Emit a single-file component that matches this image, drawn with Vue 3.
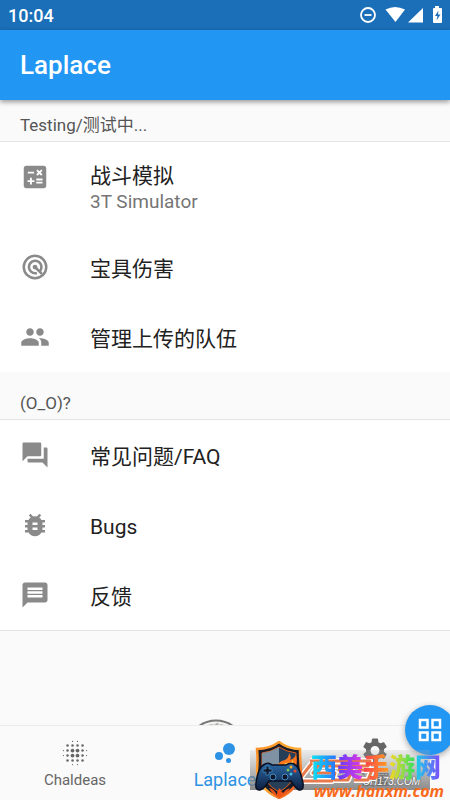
<script setup>
const sections = [
  {
    title: 'Testing/测试中...',
    items: [
      { icon: 'calc', title: '战斗模拟', subtitle: '3T Simulator' },
      { icon: 'target', title: '宝具伤害' },
      { icon: 'people', title: '管理上传的队伍' },
    ],
  },
  {
    title: '(O_O)?',
    items: [
      { icon: 'forum', title: '常见问题/FAQ' },
      { icon: 'bug', title: 'Bugs' },
      { icon: 'message', title: '反馈' },
    ],
  },
]

const paths = {
  calc: 'M19 3H5c-1.1 0-2 .9-2 2v14c0 1.1.9 2 2 2h14c1.1 0 2-.9 2-2V5c0-1.1-.9-2-2-2zm-5.97 4.06L14.09 6l1.41 1.41L16.91 6l1.06 1.06-1.41 1.41 1.41 1.41-1.06 1.06-1.41-1.4-1.41 1.41-1.06-1.06 1.41-1.41-1.41-1.42zM6.25 7.72h5v1.5h-5v-1.5zM11.5 16h-2v2H8v-2H6v-1.5h2v-2h1.5v2h2V16zm6.5 1.25h-5v-1.5h5v1.5zm0-2.5h-5v-1.5h5v1.5z',
  people: 'M16 11c1.66 0 2.99-1.34 2.99-3S17.66 5 16 5c-1.66 0-3 1.34-3 3s1.34 3 3 3zm-8 0c1.66 0 2.99-1.34 2.99-3S9.66 5 8 5C6.34 5 5 6.34 5 8s1.34 3 3 3zm0 2c-2.33 0-7 1.17-7 3.5V19h14v-2.5c0-2.33-4.67-3.5-7-3.5zm8 0c-.29 0-.62.02-.97.05 1.16.84 1.97 1.97 1.97 3.45V19h6v-2.5c0-2.33-4.67-3.5-7-3.5z',
  forum: 'M21 6h-2v9H6v2c0 .55.45 1 1 1h11l4 4V7c0-.55-.45-1-1-1zm-4 6V3c0-.55-.45-1-1-1H3c-.55 0-1 .45-1 1v14l4-4h10c.55 0 1-.45 1-1z',
  bug: 'M20 8h-2.81c-.45-.78-1.07-1.45-1.82-1.96L17 4.41 15.59 3l-2.17 2.17C12.96 5.06 12.49 5 12 5s-.96.06-1.41.17L8.41 3 7 4.41l1.62 1.63C7.88 6.55 7.26 7.22 6.81 8H4v2h2.09c-.05.33-.09.66-.09 1v1H4v2h2v1c0 .34.04.67.09 1H4v2h2.81c1.04 1.79 2.97 3 5.19 3s4.15-1.21 5.19-3H20v-2h-2.09c.05-.33.09-.66.09-1v-1h2v-2h-2v-1c0-.34-.04-.67-.09-1H20V8zm-6 8h-4v-2h4v2zm0-4h-4v-2h4v2z',
  message: 'M20 2H4c-1.1 0-1.99.9-1.99 2L2 22l4-4h14c1.1 0 2-.9 2-2V4c0-1.1-.9-2-2-2zm-2 12H6v-2h12v2zm0-3H6V9h12v2zm0-3H6V6h12v2z',
}

const dots = []
const radii = [
  [0, 0, 0.5, 0.5, 0, 0],
  [0, 1, 1, 1, 1, 0],
  [0.5, 1, 1.5, 1.5, 1, 0.5],
  [0.5, 1, 1.5, 1.5, 1, 0.5],
  [0, 1, 1, 1, 1, 0],
  [0, 0, 0.5, 0.5, 0, 0],
]
const stops = [2.75, 6, 10, 14, 18, 21.25]
radii.forEach((row, y) =>
  row.forEach((r, x) => {
    if (r) dots.push({ x: stops[x], y: stops[y], r })
  }),
)
</script>

<template>
  <div class="app">
    <div class="status">
      <span class="clock">10:04</span>
      <svg class="status-icons" viewBox="0 0 84 20" aria-hidden="true">
        <circle cx="8" cy="10" r="7" fill="none" stroke="#fff" stroke-width="1.8" />
        <path d="M4.5 10h7" stroke="#fff" stroke-width="1.8" />
        <path d="M25.500 4.500Q35 -.5 45 4.500L35.500 17Z" fill="#fff" />
        <path d="M63 3v14.500H48Z" fill="#fff" />
        <path d="M75 1h4v2h2q1 0 1 1v13q0 1-1 1h-7q-1 0-1-1V4q0-1 1-1h1z" fill="#fff" />
        <path d="M78.500 5.500l-3.500 5.500h2.500l-1 4.500 4-6h-2.500z" fill="#1a6fb8" />
      </svg>
    </div>
    <header class="bar"><h1>Laplace</h1></header>

    <main>
      <section v-for="s in sections" :key="s.title">
        <h2>{{ s.title }}</h2>
        <div class="list">
          <button v-for="i in s.items" :key="i.title" type="button" class="tile" :class="{ two: i.subtitle }">
            <svg class="icon" viewBox="0 0 24 24" aria-hidden="true">
              <g v-if="i.icon === 'target'" fill="none" stroke="currentColor" stroke-width="2">
                <circle cx="12" cy="12" r="9" />
                <path d="M15.600 15.600A5 5 0 1 0 13.500 16.800" />
                <path d="M12 12l5.500 5.500" />
                <circle cx="12" cy="12" r="1.900" fill="currentColor" stroke="none" />
              </g>
              <path v-else :d="paths[i.icon]" fill="currentColor" />
            </svg>
            <span class="label">
              <span class="title">{{ i.title }}</span>
              <span v-if="i.subtitle" class="subtitle">{{ i.subtitle }}</span>
            </span>
          </button>
        </div>
      </section>
      <div class="footer">
        <svg class="seal" viewBox="0 0 60 60" aria-hidden="true">
          <circle cx="30" cy="30" r="28.500" fill="#f5f5f1" stroke="#777" stroke-width="2" />
          <circle cx="30" cy="30" r="25" fill="none" stroke="#ccc" />
          <path d="M22 8l4-2M29 7l3-3M35 6l5 2" stroke="#aaa" stroke-width="1.500" />
        </svg>
      </div>
    </main>

    <nav>
      <button type="button" class="tab">
        <svg class="tab-icon" viewBox="0 0 24 24" aria-hidden="true">
          <circle v-for="(d, k) in dots" :key="k" :cx="d.x" :cy="d.y" :r="d.r" fill="currentColor" />
        </svg>
        <span>Chaldeas</span>
      </button>
      <button type="button" class="tab active">
        <svg class="tab-icon" viewBox="0 0 24 24" aria-hidden="true" fill="currentColor">
          <circle cx="7.200" cy="14.400" r="3.200" />
          <circle cx="14.800" cy="18" r="2" />
          <circle cx="15.200" cy="8.800" r="4.800" />
        </svg>
        <span>Laplace</span>
      </button>
      <button type="button" class="tab">
        <svg class="tab-icon" viewBox="0 0 24 24" aria-hidden="true">
          <path fill="currentColor" transform="translate(0 -2)" d="M19.140 12.940c.04-.3.06-.61.06-.94 0-.32-.02-.64-.07-.94l2.030-1.580c.18-.14.23-.41.12-.61l-1.920-3.320c-.12-.22-.37-.29-.59-.22l-2.390.96c-.5-.38-1.030-.7-1.620-.94l-.36-2.540c-.04-.24-.24-.41-.48-.41h-3.840c-.24 0-.43.17-.47.41l-.36 2.540c-.59.24-1.130.57-1.620.94l-2.390-.96c-.22-.08-.47 0-.59.22L2.740 8.870c-.12.21-.08.47.12.61l2.030 1.580c-.05.3-.09.63-.09.94s.02.64.07.94l-2.030 1.580c-.18.14-.23.41-.12.61l1.920 3.320c.12.22.37.29.59.22l2.390-.96c.5.38 1.030.7 1.620.94l.36 2.540c.05.24.24.41.48.41h3.840c.24 0 .44-.17.47-.41l.36-2.540c.59-.24 1.130-.56 1.620-.94l2.390.96c.22.08.47 0 .59-.22l1.920-3.320c.12-.22.07-.47-.12-.61l-2.010-1.580zM12 15.600c-1.980 0-3.600-1.620-3.600-3.600s1.620-3.600 3.600-3.600 3.600 1.620 3.600 3.600-1.620 3.600-3.600 3.600z" />
        </svg>
        <span>设置</span>
      </button>
    </nav>

    <button type="button" class="fab" aria-label="Windows">
      <svg viewBox="0 0 24 24" aria-hidden="true" fill="none" stroke="#fff" stroke-width="2">
        <path d="M4 4h6v6H4zM14 4h6v6h-6zM4 14h6v6H4zM14 14h6v6h-6z" />
      </svg>
    </button>

    <div class="mark">
      <div class="plate"><span>CH173.COM</span></div>
      <svg class="swoosh" viewBox="0 0 84 32" aria-hidden="true">
        <g fill="none" stroke-linejoin="round">
          <path d="M16 5h60l-2 5H24l-5 7h22l-3 8H4L18 7M44 14h14l-4 10H40M64 14h14l-4 10H60" stroke="#fff" stroke-width="6" />
          <path d="M16 5h60l-2 5H24l-5 7h22l-3 8H4L18 7M44 14h14l-4 10H40M64 14h14l-4 10H60" stroke="#e8794a" stroke-width="3" />
        </g>
      </svg>
      <svg class="shield" viewBox="0 0 54 58" aria-hidden="true">
        <defs>
          <linearGradient id="rim" x1="0" y1="0" x2="1" y2="1">
            <stop offset="0" stop-color="#ff8a24" />
            <stop offset=".5" stop-color="#ffb13b" />
            <stop offset="1" stop-color="#ed4312" />
          </linearGradient>
          <linearGradient id="pad" x1="0" y1="0" x2="0" y2="1">
            <stop offset="0" stop-color="#2c69a6" />
            <stop offset="1" stop-color="#0c1d3d" />
          </linearGradient>
        </defs>
        <path d="M27 1q9 7 21 7 0 10 1 21-2 19-22 28Q6 48 5 29 6 17 5 8 18 8 27 1Z" fill="#161c2a" stroke="url(#rim)" stroke-width="2.500" />
        <path d="M27 6q8 5 17 6v17q-2 14-17 22Q12 43 10 29V12Q19 11 27 6Z" fill="#273e59" stroke="#e8601a" />
        <path d="M27 6v22H10V12Q19 11 27 6Z" fill="#7f92a3" />
        <path d="M24 28q2-8 9-9 4-2 4-7 3 4 1 7 4-1 6-5 2 8-2 15Z" fill="#ff761c" />
        <path d="M30 27q2-6 7-5 3-1 4-3 1 6-4 9Z" fill="#ffd04c" />
        <path d="M13 23q4-2 7 1h14q4-3 8-1 6 3 9 19 1 8-4 7-3-1-8-9H17q-5 8-9 9-5 1-4-7 2-16 9-19Z" fill="url(#pad)" stroke="#0a1022" stroke-width="1.500" />
        <path d="M11 28h3v-3h3v3h3v3h-3v3h-3v-3h-3z" fill="#10182c" stroke="#4188bd" stroke-width=".8" />
        <circle cx="21" cy="36" r="3" fill="#10172a" stroke="#438cc5" />
        <circle cx="33" cy="36" r="3" fill="#10172a" stroke="#438cc5" />
        <circle cx="39" cy="26" r="1.500" fill="#ffb02c" />
        <circle cx="43" cy="30" r="1.500" fill="#ef4a28" />
        <circle cx="39" cy="33" r="1.500" fill="#4bc4e9" />
        <circle cx="36" cy="29" r="1.500" fill="#77c95a" />
        <path d="M17 47q5 1 8 7 0-5 3-7 1 4 3 5 3-4 7-5-3 6-11 10-7-4-10-10Z" fill="#ef5418" />
      </svg>
      <div class="words">
        <strong><i>西</i><i>美</i><i>手</i><i>游</i><i>网</i></strong>
        <span>www.hanxm.com</span>
      </div>
    </div>
  </div>
</template>

<style>
body {
  margin: 0;
}
</style>

<style scoped>
.app {
  position: relative;
  display: flex;
  flex-direction: column;
  min-height: 100vh;
  overflow: hidden;
  background: #fafafa;
  color: #212121;
  font-family: Roboto, "Noto Sans CJK SC", sans-serif;
}
button {
  border: 0;
  margin: 0;
  padding: 0;
  background: none;
  font: inherit;
  color: inherit;
}
.status {
  display: flex;
  align-items: center;
  justify-content: space-between;
  height: 30px;
  padding: 0 6px 0 8px;
  background: #1a6fb8;
  color: #fff;
}
.clock {
  font-size: 18px;
  font-weight: 500;
}
.status-icons {
  width: 84px;
  height: 20px;
}
.bar {
  display: flex;
  align-items: center;
  height: 70px;
  padding: 0 20px;
  background: #2196f3;
  color: #fff;
  box-shadow: 0 2px 5px rgba(0, 0, 0, 0.4);
  z-index: 1;
}
h1 {
  margin: 0;
  font-size: 26px;
  font-weight: 500;
}
main {
  display: flex;
  flex-direction: column;
  flex: 1;
}
h2 {
  display: flex;
  align-items: flex-end;
  box-sizing: border-box;
  height: 47px;
  margin: 0;
  padding: 0 20px 4px;
  color: #555;
  font-size: 17px;
  font-weight: 400;
  line-height: 24px;
}
section:first-child h2 {
  height: 41px;
}
.list {
  background: #fff;
  border-top: 1px solid #e4e4e4;
}
section:last-of-type .list {
  border-bottom: 1px solid #e4e4e4;
}
.tile {
  display: flex;
  align-items: center;
  gap: 40px;
  width: 100%;
  height: 70px;
  padding: 0 20px;
  text-align: left;
}
.tile.two {
  align-items: flex-start;
  height: 90px;
  padding-top: 20px;
}
.icon {
  flex: none;
  width: 30px;
  height: 30px;
  color: #8a8a8a;
}
.label {
  display: flex;
  flex-direction: column;
}
.tile:not(.two) .label {
  padding-top: 4px;
}
.title {
  font-size: 21px;
  line-height: 28px;
}
.subtitle {
  color: #757575;
  font-size: 19px;
  line-height: 24px;
}
.footer {
  display: flex;
  flex: 1;
  align-items: flex-start;
  justify-content: center;
  padding: 88px 18px 0 0;
  overflow: hidden;
}
.seal {
  flex: none;
  width: 60px;
  height: 60px;
  margin-bottom: -56px;
}
nav {
  display: grid;
  grid-template-columns: repeat(3, 1fr);
  height: 75px;
  box-sizing: border-box;
  border-top: 1px solid #ececec;
  background: #fafafa;
  z-index: 1;
}
.tab {
  display: flex;
  flex-direction: column;
  align-items: center;
  padding-top: 12px;
  color: #666;
  font-size: 15px;
  line-height: 24px;
}
.tab.active {
  color: #2d92e3;
  font-size: 18px;
}
.tab-icon {
  width: 30px;
  height: 30px;
}
.fab {
  position: absolute;
  right: -5px;
  bottom: 45px;
  z-index: 2;
  display: grid;
  place-items: center;
  width: 50px;
  height: 50px;
  border-radius: 50%;
  background: #2196f3;
  box-shadow: 0 2px 6px rgba(0, 0, 0, 0.35);
}
.fab svg {
  width: 30px;
  height: 30px;
}
.mark {
  position: absolute;
  right: 0;
  bottom: 0;
  z-index: 3;
  width: 200px;
  height: 60px;
}
.plate {
  position: absolute;
  left: 0;
  top: 10px;
  width: 180px;
  height: 40px;
  background: linear-gradient(rgba(180, 180, 180, 0.2), rgba(120, 120, 120, 0.85));
}
.plate span {
  position: absolute;
  right: 10px;
  bottom: 3px;
  color: #fff;
  font-family: "Liberation Sans", sans-serif;
  font-size: 10px;
  font-style: italic;
  text-shadow: 0 0 2px #333;
}
.swoosh {
  position: absolute;
  left: 44px;
  top: 16px;
  width: 84px;
  height: 32px;
}
.shield {
  position: absolute;
  left: 2px;
  top: 1px;
  width: 54px;
  height: 58px;
}
.words {
  position: absolute;
  right: 6px;
  bottom: 0;
  display: flex;
  flex-direction: column;
  align-items: flex-end;
}
strong {
  display: flex;
  padding-right: 3px;
  font-family: "Noto Sans CJK SC", sans-serif;
  font-size: 26px;
  font-weight: 900;
  line-height: 32px;
}
strong i {
  background: linear-gradient(90deg, #10e4f0, #2a70ff);
  background-clip: text;
  color: transparent;
  font-style: normal;
}
strong i:nth-child(2) {
  background-image: linear-gradient(90deg, #5a3cff, #e838e0);
}
strong i:nth-child(3) {
  background-image: linear-gradient(90deg, #ff3c50, #ffa01c);
}
strong i:nth-child(4) {
  background-image: linear-gradient(90deg, #ffd820, #30e060);
}
strong i:nth-child(5) {
  background-image: linear-gradient(90deg, #18d4e8, #8048ff);
}
.words span {
  color: #f96a1c;
  font-family: "Open Sans", sans-serif;
  font-size: 16px;
  font-style: italic;
  font-weight: 700;
  line-height: 18px;
}
</style>
